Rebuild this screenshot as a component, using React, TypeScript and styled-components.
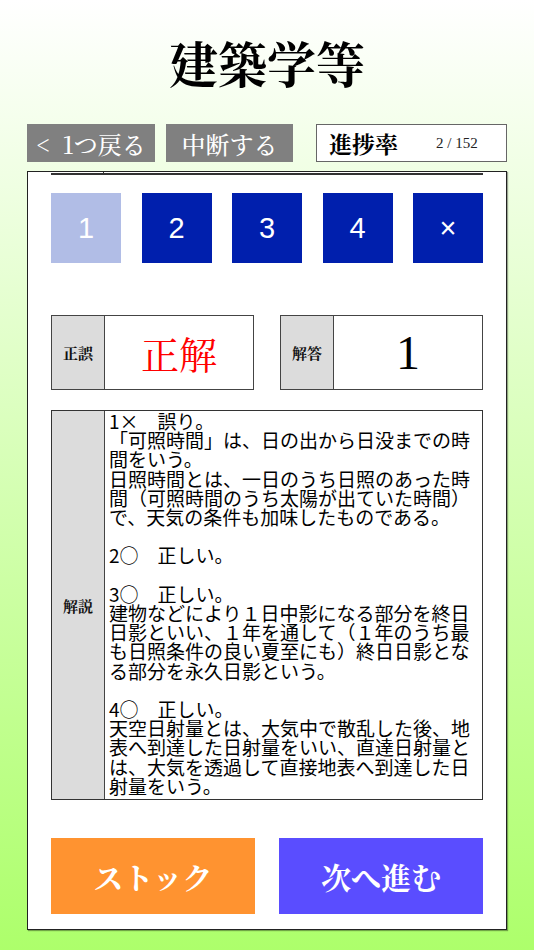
import React from "react";
import styled, { createGlobalStyle } from "styled-components";

const SERIF = `"Noto Serif CJK JP", "Liberation Serif", "Noto Sans CJK JP", serif`;
const SANS = `"Noto Sans CJK JP", "Liberation Sans", sans-serif`;

const Global = createGlobalStyle`
  html, body { margin: 0; padding: 0; }
  body { font-family: ${SANS}; }
  * { box-sizing: border-box; }
`;

const Page = styled.div`
  width: 534px;
  min-height: 950px;
  display: flex;
  flex-direction: column;
  align-items: center;
  background: linear-gradient(180deg, #ffffff 0%, #adff6b 100%);
`;

const Title = styled.h1`
  margin: 0;
  height: 124px;
  display: flex;
  align-items: center;
  justify-content: center;
  font-family: ${SERIF};
  font-weight: 700;
  font-size: 49px;
  color: #000;
`;

const Toolbar = styled.div`
  width: 480px;
  height: 38px;
  display: flex;
  align-items: stretch;
`;

const GrayButton = styled.button<{ $w: number; $gap: number }>`
  width: ${(p) => p.$w}px;
  margin-right: ${(p) => p.$gap}px;
  border: none;
  padding: 0;
  background: #808080;
  color: #fff;
  font-family: ${SERIF};
  font-size: 24px;
  font-weight: 500;
  display: flex;
  align-items: center;
  justify-content: center;
  white-space: pre;
`;

const Progress = styled.div`
  flex: 1;
  background: #fff;
  border: 1px solid #666;
  display: flex;
  align-items: center;
  padding-left: 12px;
`;

const ProgressLabel = styled.span`
  font-family: ${SERIF};
  font-weight: 700;
  font-size: 23px;
  color: #000;
  width: 107px;
`;

const ProgressValue = styled.span`
  font-family: "Liberation Serif", serif;
  font-size: 15px;
  color: #222;
`;

const Card = styled.div`
  width: 480px;
  height: 759px;
  margin-top: 9px;
  background: #fff;
  border: 1.5px solid #222;
  box-shadow: 1px 1px 1px rgba(0, 0, 0, 0.35);
  padding: 0 23px;
  display: flex;
  flex-direction: column;
`;

const ClippedEdge = styled.div`
  height: 3px;
  border-bottom: 2px solid #333;
  display: grid;
  grid-template-columns: 53px 1fr;
`;

const ClippedDivider = styled.div`
  border-right: 1.5px solid #333;
`;

const ChoiceRow = styled.div`
  margin-top: 18px;
  height: 70px;
  display: flex;
  justify-content: space-between;
`;

const Choice = styled.button<{ $selected?: boolean }>`
  width: 70px;
  height: 70px;
  border: none;
  padding: 0;
  background: ${(p) => (p.$selected ? "#b1bde6" : "#001fad")};
  color: #fff;
  font-family: "Liberation Sans", Arial, sans-serif;
  font-size: 29px;
  display: flex;
  align-items: center;
  justify-content: center;
`;

const ResultRow = styled.div`
  margin-top: 52px;
  height: 75px;
  display: flex;
  justify-content: space-between;
`;

const ResultBox = styled.div`
  width: 203px;
  height: 100%;
  border: 1.5px solid #444;
  display: grid;
  grid-template-columns: 53px 1fr;
`;

const Label = styled.div`
  background: #dcdcdc;
  border-right: 1.5px solid #444;
  display: flex;
  align-items: center;
  justify-content: center;
  font-family: ${SERIF};
  font-weight: 700;
  font-size: 15px;
  color: #111;
`;

const Value = styled.div<{ $red?: boolean; $latin?: boolean }>`
  display: flex;
  align-items: center;
  justify-content: center;
  font-family: ${(p) => (p.$latin ? `"Liberation Serif", serif` : SERIF)};
  font-size: ${(p) => (p.$latin ? 48 : 38)}px;
  font-weight: 400;
  color: ${(p) => (p.$red ? "#ff0000" : "#000")};
`;

const ExplainBox = styled.div`
  margin-top: 20px;
  height: 390px;
  border: 1.5px solid #333;
  display: grid;
  grid-template-columns: 53px 1fr;
`;

const ExplainText = styled.div`
  padding: 0 0 0 4px;
  font-family: ${SANS};
  font-size: 19px;
  line-height: 19.2px;
  color: #000;
  white-space: pre;
`;

const ActionRow = styled.div`
  margin-top: 38px;
  height: 76px;
  display: flex;
  justify-content: space-between;
`;

const ActionButton = styled.button<{ $color: string }>`
  width: 204px;
  height: 100%;
  border: none;
  padding: 0;
  background: ${(p) => p.$color};
  color: #fff;
  font-family: ${SERIF};
  font-weight: 700;
  font-size: 30px;
  display: flex;
  align-items: center;
  justify-content: center;
`;

const explanation = [
  "1×　誤り。",
  "「可照時間」は、日の出から日没までの時",
  "間をいう。",
  "日照時間とは、一日のうち日照のあった時",
  "間（可照時間のうち太陽が出ていた時間）",
  "で、天気の条件も加味したものである。",
  "",
  "2○　正しい。",
  "",
  "3○　正しい。",
  "建物などにより１日中影になる部分を終日",
  "日影といい、１年を通して（１年のうち最",
  "も日照条件の良い夏至にも）終日日影とな",
  "る部分を永久日影という。",
  "",
  "4○　正しい。",
  "天空日射量とは、大気中で散乱した後、地",
  "表へ到達した日射量をいい、直達日射量と",
  "は、大気を透過して直接地表へ到達した日",
  "射量をいう。",
].join("\n");

const choices = ["1", "2", "3", "4", "×"];

export default function App() {
  return (
    <>
      <Global />
      <Page>
        <Title>建築学等</Title>
        <Toolbar>
          <GrayButton $w={128} $gap={11}>{"<  1つ戻る"}</GrayButton>
          <GrayButton $w={127} $gap={23}>中断する</GrayButton>
          <Progress>
            <ProgressLabel>進捗率</ProgressLabel>
            <ProgressValue>2 / 152</ProgressValue>
          </Progress>
        </Toolbar>
        <Card>
          <ClippedEdge>
            <ClippedDivider />
          </ClippedEdge>
          <ChoiceRow>
            {choices.map((c, i) => (
              <Choice key={c} $selected={i === 0}>
                {c}
              </Choice>
            ))}
          </ChoiceRow>
          <ResultRow>
            <ResultBox>
              <Label>正誤</Label>
              <Value $red>正解</Value>
            </ResultBox>
            <ResultBox>
              <Label>解答</Label>
              <Value $latin>1</Value>
            </ResultBox>
          </ResultRow>
          <ExplainBox>
            <Label>解説</Label>
            <ExplainText>{explanation}</ExplainText>
          </ExplainBox>
          <ActionRow>
            <ActionButton $color="#ff9330">ストック</ActionButton>
            <ActionButton $color="#5a4dff">次へ進む</ActionButton>
          </ActionRow>
        </Card>
      </Page>
    </>
  );
}
